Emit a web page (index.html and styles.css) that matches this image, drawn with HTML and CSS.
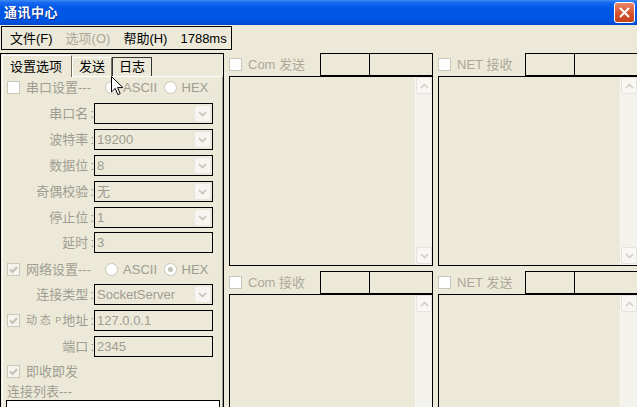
FILE: index.html
```html
<!DOCTYPE html>
<html lang="zh-CN">
<head>
    <meta charset="UTF-8">
    <title>通讯中心</title>
    <link rel="stylesheet" href="styles.css">
</head>
<body>

<div class="window">
    <div class="titlebar">
        <span class="title">通讯中心</span>
        <span class="close">
            <svg width="11" height="11" viewBox="0 0 11 11"><path d="M1.5 1.5L9.5 9.5M9.5 1.5L1.5 9.5" stroke="#fff" stroke-width="2" stroke-linecap="round"/></svg>
        </span>
    </div>

    <div class="menubar">
        <span>文件(F)</span>
        <span class="off">选项(O)</span>
        <span>帮助(H)</span>
        <span>1788ms</span>
    </div>

    <div class="main">
        <!-- settings tabs -->
        <div class="tabctl">
            <div class="tabstrip">
                <div class="tab active">设置选项</div>
                <div class="tab">发送</div>
                <div class="tab hot">日志</div>
            </div>
            <div class="pane">
                <div class="check-row first">
                    <div class="chk-group"><span class="chk"></span><span>串口设置---</span></div>
                    <div class="radio-group"><span class="radio"></span><span>ASCII</span></div>
                    <div class="radio-group"><span class="radio"></span><span>HEX</span></div>
                </div>

                <div class="field first">
                    <span class="lbl">串口名<b class="colon">:</b></span>
                    <div class="box combo"><span class="val"></span><span class="dd"><svg width="9" height="6" viewBox="0 0 9 6"><path d="M1 1l3.5 3.5L8 1" fill="none" stroke="#c6c4b8" stroke-width="1.6"/></svg></span></div>
                </div>
                <div class="field">
                    <span class="lbl">波特率<b class="colon">:</b></span>
                    <div class="box combo"><span class="val">19200</span><span class="dd"><svg width="9" height="6" viewBox="0 0 9 6"><path d="M1 1l3.5 3.5L8 1" fill="none" stroke="#c6c4b8" stroke-width="1.6"/></svg></span></div>
                </div>
                <div class="field">
                    <span class="lbl">数据位<b class="colon">:</b></span>
                    <div class="box combo"><span class="val">8</span><span class="dd"><svg width="9" height="6" viewBox="0 0 9 6"><path d="M1 1l3.5 3.5L8 1" fill="none" stroke="#c6c4b8" stroke-width="1.6"/></svg></span></div>
                </div>
                <div class="field">
                    <span class="lbl">奇偶校验<b class="colon">:</b></span>
                    <div class="box combo"><span class="val">无</span><span class="dd"><svg width="9" height="6" viewBox="0 0 9 6"><path d="M1 1l3.5 3.5L8 1" fill="none" stroke="#c6c4b8" stroke-width="1.6"/></svg></span></div>
                </div>
                <div class="field">
                    <span class="lbl">停止位<b class="colon">:</b></span>
                    <div class="box combo"><span class="val">1</span><span class="dd"><svg width="9" height="6" viewBox="0 0 9 6"><path d="M1 1l3.5 3.5L8 1" fill="none" stroke="#c6c4b8" stroke-width="1.6"/></svg></span></div>
                </div>
                <div class="field tight">
                    <span class="lbl">延时<b class="colon">:</b></span>
                    <div class="box"><span class="val">3</span></div>
                </div>

                <div class="check-row">
                    <div class="chk-group"><span class="chk checked"><svg width="11" height="11" viewBox="0 0 11 11"><path d="M2 5.5l2.5 2.5L9 3" fill="none" stroke="#c3c1b4" stroke-width="2"/></svg></span><span>网络设置---</span></div>
                    <div class="radio-group"><span class="radio"></span><span>ASCII</span></div>
                    <div class="radio-group"><span class="radio on"></span><span>HEX</span></div>
                </div>

                <div class="field wide">
                    <span class="lbl">连接类型<b class="colon">:</b></span>
                    <div class="box combo"><span class="val">SocketServer</span><span class="dd"><svg width="9" height="6" viewBox="0 0 9 6"><path d="M1 1l3.5 3.5L8 1" fill="none" stroke="#c6c4b8" stroke-width="1.6"/></svg></span></div>
                </div>
                <div class="field">
                    <span class="lbl lbl-check">
                        <span class="chk checked"><svg width="11" height="11" viewBox="0 0 11 11"><path d="M2 5.5l2.5 2.5L9 3" fill="none" stroke="#c3c1b4" stroke-width="2"/></svg></span>
                        <span class="tiny">动态</span>
                        <span class="ip"><span class="frag">P</span>地址<b class="colon">:</b></span>
                    </span>
                    <div class="box"><span class="val">127.0.0.1</span></div>
                </div>
                <div class="field">
                    <span class="lbl">端口<b class="colon">:</b></span>
                    <div class="box"><span class="val">2345</span></div>
                </div>

                <div class="check-row solo">
                    <div class="chk-group"><span class="chk checked"><svg width="11" height="11" viewBox="0 0 11 11"><path d="M2 5.5l2.5 2.5L9 3" fill="none" stroke="#c3c1b4" stroke-width="2"/></svg></span><span>即收即发</span></div>
                </div>
                <div class="caption">连接列表---</div>
                <div class="listbox"></div>
            </div>
        </div>

        <!-- data panels -->
        <div class="panels">
            <div class="panel">
                <div class="phead">
                    <span class="chk"></span><span class="ptitle">Com 发送</span>
                    <span class="pbox"></span><span class="pbox last"></span>
                </div>
                <div class="ta">
                    <div class="sb">
                        <span class="sbtn"><svg width="9" height="6" viewBox="0 0 9 6"><path d="M1 5l3.5-3.5L8 5" fill="none" stroke="#d2d0c5" stroke-width="1.6"/></svg></span>
                        <span class="sbtn"><svg width="9" height="6" viewBox="0 0 9 6"><path d="M1 1l3.5 3.5L8 1" fill="none" stroke="#d2d0c5" stroke-width="1.6"/></svg></span>
                    </div>
                </div>
            </div>
            <div class="panel">
                <div class="phead">
                    <span class="chk"></span><span class="ptitle">NET 接收</span>
                    <span class="pbox"></span><span class="pbox last"></span>
                </div>
                <div class="ta">
                    <div class="sb">
                        <span class="sbtn"><svg width="9" height="6" viewBox="0 0 9 6"><path d="M1 5l3.5-3.5L8 5" fill="none" stroke="#d2d0c5" stroke-width="1.6"/></svg></span>
                        <span class="sbtn"><svg width="9" height="6" viewBox="0 0 9 6"><path d="M1 1l3.5 3.5L8 1" fill="none" stroke="#d2d0c5" stroke-width="1.6"/></svg></span>
                    </div>
                </div>
            </div>
            <div class="panel">
                <div class="phead">
                    <span class="chk"></span><span class="ptitle">Com 接收</span>
                    <span class="pbox"></span><span class="pbox last"></span>
                </div>
                <div class="ta tall">
                    <div class="sb">
                        <span class="sbtn"><svg width="9" height="6" viewBox="0 0 9 6"><path d="M1 5l3.5-3.5L8 5" fill="none" stroke="#d2d0c5" stroke-width="1.6"/></svg></span>
                    </div>
                </div>
            </div>
            <div class="panel">
                <div class="phead">
                    <span class="chk"></span><span class="ptitle">NET 发送</span>
                    <span class="pbox"></span><span class="pbox last"></span>
                </div>
                <div class="ta tall">
                    <div class="sb">
                        <span class="sbtn"><svg width="9" height="6" viewBox="0 0 9 6"><path d="M1 5l3.5-3.5L8 5" fill="none" stroke="#d2d0c5" stroke-width="1.6"/></svg></span>
                    </div>
                </div>
            </div>
        </div>
    </div>

    <!-- mouse pointer -->
    <svg class="cursor" width="13" height="20" viewBox="0 0 13 20"><path d="M0.5 0.5V16L4.2 12.4L6.8 18.6L9.2 17.6L6.6 11.6H11.8Z" fill="#fff" stroke="#000" stroke-linejoin="round"/></svg>
</div>

</body>
</html>
```

FILE: styles.css
```css
* {
    box-sizing: border-box;
}
body {
    margin: 0;
    font-family: "Liberation Sans", "Noto Sans CJK SC", sans-serif;
    font-size: 13px;
    line-height: 15px;
}
.window {
    position: relative;
    width: 637px;
    height: 407px;
    overflow: hidden;
    background-color: #ece9d8;
}

/* title bar */
.titlebar {
    height: 25px;
    display: flex;
    align-items: center;
    justify-content: space-between;
    padding: 0 2px 0 4px;
    background: linear-gradient(to bottom, #3d8cf6 0%, #1a6af0 10%, #0058e8 30%, #0056e5 70%, #0052de 88%, #0046cc 100%);
}
.title {
    color: #fff;
    font-weight: bold;
    font-size: 13px;
    text-shadow: 1px 1px #0c2a8c;
    letter-spacing: 0.5px;
}
.close {
    width: 21px;
    height: 21px;
    display: flex;
    align-items: center;
    justify-content: center;
    border: 1px solid #fff;
    border-radius: 3px;
    background: linear-gradient(to bottom, #e9876a, #d6532d 55%, #c3411c);
}

/* menu */
.menubar {
    width: 231px;
    height: 24px;
    margin: 1px 0 0 1px;
    padding-left: 8px;
    display: flex;
    align-items: center;
    gap: 13px;
    border: 1px solid #000;
    color: #000;
}
.menubar .off {
    color: #aca899;
}

.main {
    display: flex;
    margin-top: 3px;
}

/* tab control */
.tabctl {
    width: 224px;
    height: 360px;
    padding-left: 1px;
    border: 1px solid #000;
    border-bottom: none;
}
.tabstrip {
    height: 22px;
    display: flex;
    align-items: flex-end;
}
.tab {
    height: 19px;
    padding: 1px 6px 0;
    border: 1px solid #fff;
    border-right-color: #716f64;
    border-bottom: none;
    color: #000;
}
.tab.active {
    height: 22px;
    padding: 3px 9px 0 7px;
    margin-bottom: -1px;
    background-color: #ece9d8;
    position: relative;
}
.tab.hot {
    border-color: #333;
}
.pane {
    width: 221px;
    height: 340px;
    padding-left: 1px;
    border-top: 1px solid #fff;
    border-left: 1px solid #fff;
    border-right: 1px solid #9d9b90;
    color: #9f9d92;
}

.check-row {
    height: 16px;
    margin-top: 8px;
    display: flex;
    align-items: center;
}
.check-row.first {
    margin-top: 2px;
}
.check-row.solo {
    margin-top: 6px;
}
.chk-group {
    width: 107px;
    padding-left: 3px;
    display: flex;
    align-items: center;
    gap: 6px;
}
.radio-group {
    width: 62px;
    display: flex;
    align-items: center;
    gap: 5px;
}
.chk {
    width: 13px;
    height: 13px;
    flex: none;
    display: flex;
    align-items: center;
    justify-content: center;
    border: 1px solid #cac8bb;
    background-color: #fff;
}
.chk.checked {
    background-color: #f4f3ee;
}
.radio {
    width: 13px;
    height: 13px;
    flex: none;
    display: flex;
    align-items: center;
    justify-content: center;
    border: 1px solid #cac8bb;
    border-radius: 50%;
    background-color: #fff;
}
.radio.on::after {
    content: "";
    width: 5px;
    height: 5px;
    border-radius: 50%;
    background-color: #c3c1b4;
}

.field {
    height: 21px;
    margin-top: 5px;
    display: flex;
}
.field.first {
    margin-top: 8px;
}
.field.tight {
    margin-top: 4px;
}
.field.wide {
    margin-top: 7px;
}
.lbl {
    width: 90px;
    text-align: right;
    line-height: 21px;
}
.colon {
    font-weight: normal;
    margin-left: 2px;
    color: #8f8d83;
}
.lbl-check {
    display: flex;
    align-items: center;
    padding-left: 3px;
}
.tiny {
    font-size: 11px;
    letter-spacing: 3px;
    margin-left: 6px;
}
.ip {
    margin-left: auto;
    display: flex;
    align-items: center;
}
.frag {
    font-size: 9px;
    margin-right: 1px;
}
.box {
    width: 119px;
    height: 21px;
    display: flex;
    align-items: center;
    border: 1px solid #000;
    background-color: #ece9d8;
}
.val {
    flex: 1;
    padding-left: 2px;
}
.dd {
    width: 17px;
    height: 17px;
    margin-right: 1px;
    display: flex;
    align-items: center;
    justify-content: center;
    border: 1px solid #e8e6dd;
    border-radius: 2px;
    background-color: #f6f5f1;
}
.caption {
    height: 16px;
    margin-top: 5px;
    padding-left: 3px;
}
.listbox {
    width: 214px;
    height: 40px;
    margin-left: 2px;
    border: 1px solid #000;
    background-color: #fff;
}

/* right side panels */
.panels {
    margin-left: 5px;
    display: grid;
    grid-template-columns: 204px 200px;
    column-gap: 5px;
    row-gap: 5px;
    align-content: start;
}
.phead {
    height: 23px;
    display: flex;
    align-items: center;
}
.ptitle {
    margin-left: 6px;
    color: #aca899;
}
.pbox {
    width: 50px;
    height: 23px;
    margin-left: auto;
    border: 1px solid #000;
}
.pbox.last {
    width: 63px;
    margin-left: 0;
    border-left: none;
}
.ta {
    height: 190px;
    display: flex;
    justify-content: flex-end;
    border: 1px solid #000;
}
.ta.tall {
    height: 130px;
}
.sb {
    width: 17px;
    display: flex;
    flex-direction: column;
    justify-content: space-between;
    padding-bottom: 1px;
    background-color: #f3f2ec;
    border-left: 1px solid #f8f7f4;
}
.sbtn {
    height: 17px;
    display: flex;
    align-items: center;
    justify-content: center;
    border: 1px solid #e6e4dc;
    border-radius: 2px;
    background-color: #f8f7f3;
}

.cursor {
    position: absolute;
    left: 111px;
    top: 76px;
}
```
